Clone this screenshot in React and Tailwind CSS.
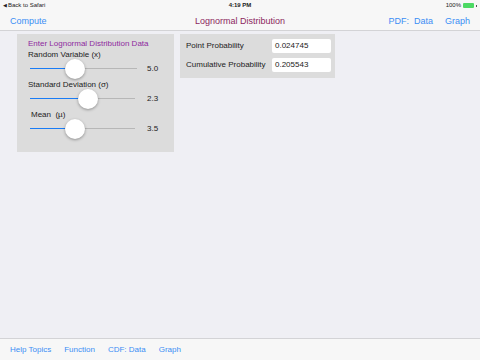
import React from 'react';

function Slider({ pos, width = 107 }) {
    return (
        <div className="relative h-[20px]" style={{ width }}>
            <div className="absolute left-0 right-0 top-[9px] h-[1px] bg-[#b7b7b7]"></div>
            <div className="absolute left-0 top-[9px] h-[1px] bg-[#1a7cf5]" style={{ width: pos }}></div>
            <div className="absolute top-0 w-[20px] h-[20px] rounded-full bg-white shadow-[0_1px_3px_rgba(0,0,0,0.35)]" style={{ left: pos - 10 }}></div>
        </div>
    );
}

export default function App() {
    return (
        <div className="w-[480px] h-[360px] bg-[#efeff4] flex flex-col font-['Liberation_Sans',sans-serif] overflow-hidden">
            <div className="bg-[#f7f7f7] border-b border-[#d3d3d6] h-[31px] flex flex-col">
                <div className="h-[10px] relative flex items-center justify-center text-[6px] text-[#222]">
                    <div className="absolute left-[3px] top-[1px] flex items-center gap-[1px]">
                        <span className="text-[5px]">◀</span>Back to Safari
                    </div>
                    <span className="font-bold">4:19 PM</span>
                    <div className="absolute right-[3px] top-[1px] flex items-center gap-[2px]">
                        100%
                        <div className="w-[11px] h-[5px] bg-[#4cd964] rounded-[1px]"></div>
                        <div className="w-[1px] h-[2px] bg-[#555]"></div>
                    </div>
                </div>
                <div className="flex-1 relative flex items-center justify-center text-[9px] pt-[3px]">
                    <span className="absolute left-[10px] text-[#3b8ef5]">Compute</span>
                    <span className="text-[#8c1f5e]">Lognormal Distribution</span>
                    <div className="absolute right-[10px] flex gap-[12px] text-[#3b8ef5]">
                        <span>PDF:&nbsp; Data</span>
                        <span>Graph</span>
                    </div>
                </div>
            </div>

            <div className="flex-1 flex items-start gap-[6px] pl-[17px] pt-[3px]">
                <div className="w-[157px] h-[118px] bg-[#dcdcdc] pl-[11px] pt-[4px] text-[8px] text-[#222]">
                    <div className="text-[#8e2a9e] h-[11px]">Enter Lognormal Distribution Data</div>
                    <div className="h-[10px]">Random Variable (x)</div>
                    <div className="flex items-center h-[20px] gap-[10px] pl-[2px]">
                        <Slider pos={45} />
                        <span>5.0</span>
                    </div>
                    <div className="h-[10px]">Standard Deviation (σ)</div>
                    <div className="flex items-center h-[20px] gap-[12px] pl-[2px]">
                        <Slider pos={58} width={105} />
                        <span>2.3</span>
                    </div>
                    <div className="h-[10px] pl-[3px]">Mean&nbsp; (µ)</div>
                    <div className="flex items-center h-[20px] gap-[12px] pl-[2px]">
                        <Slider pos={45} width={105} />
                        <span>3.5</span>
                    </div>
                </div>

                <div className="w-[155px] h-[44px] bg-[#dcdcdc] px-[6px] pt-[5px] flex flex-col gap-[5px] text-[8px] text-[#222]">
                    <div className="flex items-center justify-between">
                        <span>Point Probability</span>
                        <div className="w-[59px] h-[14px] bg-white rounded-[2px] flex items-center pl-[3px] mr-[-2px]">0.024745</div>
                    </div>
                    <div className="flex items-center justify-between">
                        <span>Cumulative Probability</span>
                        <div className="w-[59px] h-[14px] bg-white rounded-[2px] flex items-center pl-[3px] mr-[-2px]">0.205543</div>
                    </div>
                </div>
            </div>

            <div className="h-[22px] bg-[#f7f7f7] border-t border-[#d3d3d6] flex items-center gap-[13px] pl-[10px] text-[8px] text-[#3b8ef5]">
                <span>Help Topics</span>
                <span>Function</span>
                <span>CDF: Data</span>
                <span>Graph</span>
            </div>
        </div>
    );
}
